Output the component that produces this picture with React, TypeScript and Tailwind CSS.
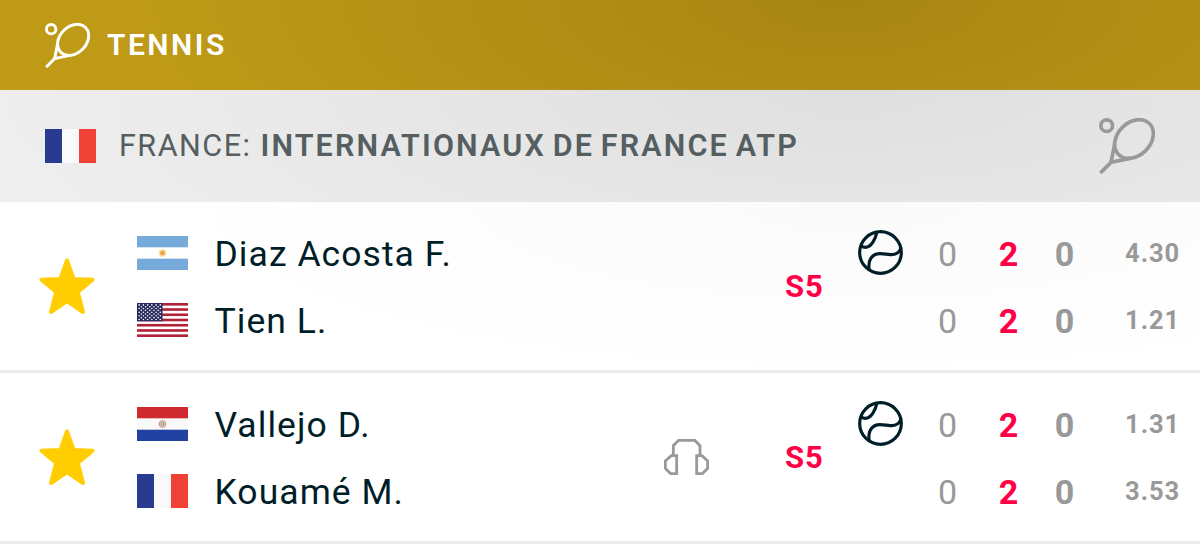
import type { ReactNode } from 'react'

type Country = 'fr' | 'ar' | 'us' | 'py'

interface Player {
  name: string
  country: Country
  serving?: boolean
  sets: string
  games: string
  points: string
  odds: string
}

interface Match {
  id: number
  status: string
  audio?: boolean
  players: Player[]
}

const matches: Match[] = [
  {
    id: 1,
    status: 'S5',
    players: [
      { name: 'Diaz Acosta F.', country: 'ar', serving: true, sets: '0', games: '2', points: '0', odds: '4.30' },
      { name: 'Tien L.', country: 'us', sets: '0', games: '2', points: '0', odds: '1.21' }
    ]
  },
  {
    id: 2,
    status: 'S5',
    audio: true,
    players: [
      { name: 'Vallejo D.', country: 'py', serving: true, sets: '0', games: '2', points: '0', odds: '1.31' },
      { name: 'Kouamé M.', country: 'fr', sets: '0', games: '2', points: '0', odds: '3.53' }
    ]
  }
]

function RacketIcon({ className }: { className: string }) {
  return (
    <svg viewBox="0 0 168 168" fill="none" stroke="currentColor" strokeWidth="11" className={className}>
      <circle cx="23" cy="23" r="17.5" />
      <ellipse cx="105" cy="63" rx="65.5" ry="49.5" transform="rotate(-45 105 63)" />
      <path d="M47 78 L36 133 L92 121 M36 133 L4 165" />
    </svg>
  )
}

function StarIcon() {
  return (
    <svg viewBox="0 0 56 57" className="h-[57px] w-14 text-[#ffcd00]">
      <path
        d="M28 2.5 L34.6 21 L53.5 21.8 L38.8 34 L44 54 L28 43.2 L12 54 L17.2 34 L2.5 21.8 L21.4 21 Z"
        fill="currentColor"
        stroke="currentColor"
        strokeWidth="4"
        strokeLinejoin="round"
      />
    </svg>
  )
}

function BallIcon() {
  return (
    <svg viewBox="0 0 135 135" fill="none" stroke="#001e28" strokeWidth="9.5" className="size-[45px]">
      <circle cx="67.5" cy="67.5" r="62.5" />
      <path d="M57 5 C53 26 40 52 22 52 C17 52 13 50 9 47" />
      <path d="M129 52 C126 67 113 75 97 74 C84 73 79 71 66 71 C42 71 28 90 34 122" />
    </svg>
  )
}

function HeadphonesIcon() {
  return (
    <svg viewBox="0 0 135 108" fill="none" stroke="#999" strokeWidth="8.5" className="h-9 w-[45px]">
      <path d="M28 50 V20 L44 4 H92 L108 20 V50" />
      <path d="M38 50 H22 L4 66 V88 L20 104 H38 Z M98 50 H114 L131 66 V88 L115 104 H98 Z" />
    </svg>
  )
}

function Flag({ country }: { country: Country }) {
  const drawings: Record<Country, ReactNode> = {
    fr: (
      <>
        <rect width="51" height="34" fill="#f9f9f9" />
        <rect width="17" height="34" fill="#293a91" />
        <rect x="34" width="17" height="34" fill="#ef4135" />
      </>
    ),
    ar: (
      <>
        <rect width="51" height="34" fill="#fff" />
        <rect width="51" height="11.3" fill="#75aadb" />
        <rect y="22.7" width="51" height="11.3" fill="#75aadb" />
        <circle cx="25.5" cy="17" r="4" fill="#f6b40e" opacity="0.3" />
        <circle cx="25.5" cy="17" r="2.5" fill="#eba550" />
      </>
    ),
    us: (
      <>
        <rect width="51" height="34" fill="#fff" />
        {[0, 1, 2, 3, 4, 5, 6].map((i) => (
          <rect key={i} y={i * 5.23} width="51" height="2.62" fill="#b22239" />
        ))}
        <rect width="25.5" height="18.3" fill="#262a5e" />
        {Array.from({ length: 9 }, (_, row) =>
          Array.from({ length: row % 2 ? 5 : 6 }, (_, col) => (
            <circle
              key={`${row}-${col}`}
              cx={2.2 + col * 4.22 + (row % 2 ? 2.11 : 0)}
              cy={1.9 + row * 1.82}
              r="0.8"
              fill="#fff"
            />
          ))
        )}
      </>
    ),
    py: (
      <>
        <rect width="51" height="34" fill="#f9f9f9" />
        <rect width="51" height="11.3" fill="#cf2a30" />
        <rect y="22.7" width="51" height="11.3" fill="#2142a0" />
        <circle cx="25.5" cy="17" r="3.3" fill="none" stroke="#d66a62" strokeWidth="0.9" />
        <circle cx="25.5" cy="17" r="1.7" fill="#d5cf96" stroke="#75906a" strokeWidth="0.9" />
      </>
    )
  }

  return (
    <svg viewBox="0 0 51 34" className="h-[34px] w-[51px] shrink-0">
      {drawings[country]}
    </svg>
  )
}

function MatchRow({ match }: { match: Match }) {
  return (
    <div className="flex h-[171px] items-center border-b-3 border-[#ebebeb]">
      <div className="flex w-[137px] pl-[39px]">
        <StarIcon />
      </div>
      <div className="flex w-[527px] flex-col">
        {match.players.map((player) => (
          <div key={player.name} className="flex h-[67px] items-center gap-[26.5px]">
            <Flag country={player.country} />
            <span className="pt-[4px] text-[35.5px] tracking-[1.05px] whitespace-nowrap text-[#001e28]">
              {player.name}
            </span>
          </div>
        ))}
      </div>
      <div className="w-[121px]">{match.audio && <HeadphonesIcon />}</div>
      <div className="w-[73px] pt-[2px] text-[31px] font-bold tracking-[1px] text-[#ff0046]">{match.status}</div>
      <div className="flex flex-col">
        {match.players.map((player) => (
          <div key={player.name} className="flex h-[67px] items-center text-[34px] text-[#999]">
            <div className="w-[59px]">{player.serving && <BallIcon />}</div>
            <span className="w-[61px] pt-[3px] text-center font-normal">{player.sets}</span>
            <span className="w-[61px] pt-[3px] text-center font-bold text-[#ff0046]">{player.games}</span>
            <span className="w-[51px] pt-[3px] text-center font-bold">{player.points}</span>
            <span className="w-[90px] pt-[2px] text-right text-[25.5px] font-bold tracking-[0.9px]">
              {player.odds}
            </span>
          </div>
        ))}
      </div>
    </div>
  )
}

export default function App() {
  return (
    <div className="h-[550px] w-[1200px] overflow-hidden bg-white font-['Roboto','Liberation_Sans',sans-serif]">
      <header className="flex h-[90px] items-center gap-[17px] bg-[radial-gradient(ellipse_700px_260px_at_840px_0px,#a78512,#be9a17)] pl-[45px] text-white">
        <RacketIcon className="size-[45px]" />
        <h1 className="pb-[2px] text-[30px] font-semibold tracking-[2.5px]">TENNIS</h1>
      </header>
      <div className="flex h-28 items-center bg-[radial-gradient(ellipse_860px_260px_at_850px_0px,#dfdfdf,#eeeeee)] px-[45px] text-[#555e61]">
        <Flag country="fr" />
        <h2 className="ml-[23px] text-[30.5px] tracking-[1.5px] whitespace-nowrap">
          FRANCE:{' '}
          <span className="font-semibold tracking-[2.15px] [word-spacing:-3px]">INTERNATIONAUX DE FRANCE ATP</span>
        </h2>
        <RacketIcon className="ml-auto size-14 text-[#999]" />
      </div>
      <main className="bg-[radial-gradient(ellipse_700px_180px_at_850px_0px,#fafafa,#ffffff)]">
        {matches.map((match) => (
          <MatchRow key={match.id} match={match} />
        ))}
      </main>
    </div>
  )
}
